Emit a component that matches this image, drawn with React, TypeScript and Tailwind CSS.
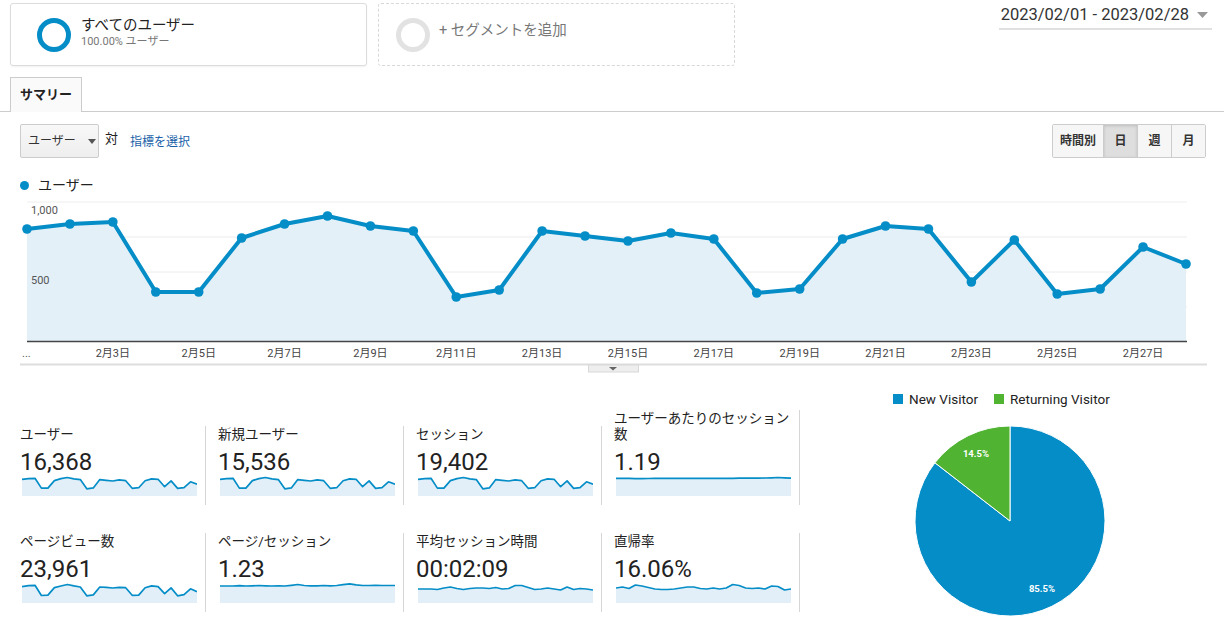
import React from 'react';

const BLUE = '#058dc7';

// pixel y of each day's point in the main chart (2/1 .. 2/28)
const MAIN_Y = [229, 224, 222, 292, 292, 238, 224, 216, 226, 231, 297, 290, 231, 236, 241, 233, 239, 293, 289, 239, 226, 229, 282, 240, 294, 289, 247, 264];

const usersSpark = MAIN_Y.map((y) => 1.5 + (y - 216) * 0.14);
const pvSpark = MAIN_Y.map((y, i) => 1.5 + (y - 216) * 0.14 + (i % 3 === 0 ? 0.4 : 0));
const perUserSpark = [2.4, 2.4, 2.4, 2.6, 2.6, 2.5, 2.4, 2.4, 2.4, 2.4, 2.4, 2.3, 2.3, 2.3, 2.3, 2.3, 2.3, 2.3, 2.3, 2.2, 2.2, 2.2, 2.1, 2.0, 1.8, 1.5, 1.8, 2.2];
const ppsSpark = [3, 3, 3, 2.6, 3, 2.8, 2.5, 2.8, 3, 2.8, 3, 2.3, 1.5, 2.5, 2.8, 2.8, 2.5, 2.8, 2.5, 1.6, 0.9, 1.8, 2.5, 2.5, 2.3, 2.5, 2.5, 2.5];
const durSpark = [6, 6, 6, 6.5, 5, 4, 5.5, 6.5, 5.5, 5, 5, 5.5, 4.5, 6, 5.5, 2.5, 2.5, 4.5, 6.5, 6, 5, 6, 7, 4, 6.5, 5.5, 6, 7];
const bounceSpark = [5, 4, 5.5, 2, 3, 4.5, 6, 6.5, 6.5, 6, 5, 4, 4, 5.5, 6, 5, 6, 5, 1.5, 2.5, 5, 5.5, 5, 6, 3, 3.5, 7, 6];

function Sparkline({ data }: { data: number[] }) {
  const w = 175;
  const h = 20;
  const step = w / (data.length - 1);
  const pts = data.map((y, i) => `${(i * step).toFixed(1)},${y.toFixed(1)}`);
  return (
    <svg width={w} height={h} className="ml-[2px] block">
      <path d={`M0,${h} L${pts.join(' L')} L${w},${h} Z`} fill="#e3eff8" />
      <polyline points={pts.join(' ')} fill="none" stroke={BLUE} strokeWidth={1.7} strokeLinejoin="round" />
    </svg>
  );
}

function Metric({ label, value, data }: { label: React.ReactNode; value: string; data: number[] }) {
  return (
    <div className="w-[198px] border-r border-[#d6d6d6] pl-[12px] pb-[9px]">
      <div className="whitespace-nowrap text-[13.5px] leading-[16px] text-[#222]">{label}</div>
      <div className="mt-[6px] text-[24px] leading-[28px] text-[#222]">{value}</div>
      <Sparkline data={data} />
    </div>
  );
}

function MainChart() {
  const step = (1186 - 27) / 27;
  const xs = MAIN_Y.map((_, i) => 7 + i * step);
  const ys = MAIN_Y.map((y) => y - 195);
  const line = xs.map((x, i) => `${x.toFixed(1)},${ys[i]}`).join(' L');
  const labels = [2, 4, 6, 8, 10, 12, 14, 16, 18, 20, 22, 24, 26];
  return (
    <svg width={1190} height={180} className="ml-[20px] block">
      {[7, 42, 77, 112].map((y) => (
        <line key={y} x1={7} x2={1167} y1={y} y2={y} stroke={y === 7 ? '#eeeeee' : '#ececec'} strokeWidth={1} />
      ))}
      <path d={`M${xs[0]},146 L${line} L${xs[27]},146 Z`} fill="#e3f0f8" />
      <line x1={7} x2={1167} y1={146.5} y2={146.5} stroke="#444" strokeWidth={1.5} />
      <text x={11} y={19} fontSize={11} fill="#555">1,000</text>
      <text x={11} y={89} fontSize={11} fill="#555">500</text>
      <path d={`M${line}`} fill="none" stroke={BLUE} strokeWidth={4} strokeLinejoin="round" />
      {xs.map((x, i) => (
        <circle key={i} cx={x} cy={ys[i]} r={4.8} fill={BLUE} />
      ))}
      <text x={2} y={162} fontSize={11} fill="#555">...</text>
      {labels.map((i) => (
        <text key={i} x={xs[i]} y={162} fontSize={11} fill="#444" textAnchor="middle">
          {`2月${i + 1}日`}
        </text>
      ))}
      <line x1={0} x2={1187} y1={169.5} y2={169.5} stroke="#dddddd" strokeWidth={2} />
      <rect x={568.5} y={170} width={50} height={7} fill="#eeeeee" stroke="#d8d8d8" />
      <path d="M589,172 L597,172 L593,175.5 Z" fill="#666" />
    </svg>
  );
}

function Pie() {
  return (
    <svg width={200} height={200} className="ml-[30px] mt-[15px] block">
      <path d="M100,100 L24.93,41.78 A95,95 0 1,0 100,5 Z" fill={BLUE} stroke="#fff" strokeWidth={1} />
      <path d="M100,100 L100,5 A95,95 0 0,0 24.93,41.78 Z" fill="#50b432" stroke="#fff" strokeWidth={1} />
      <text x={66} y={35.5} fontSize={9.5} fontWeight={700} fill="#fff" textAnchor="middle">14.5%</text>
      <text x={132} y={170.5} fontSize={9.5} fontWeight={700} fill="#fff" textAnchor="middle">85.5%</text>
    </svg>
  );
}

export default function App() {
  return (
    <div className="h-[620px] w-[1224px] overflow-hidden bg-white font-[family-name:Roboto,Noto_Sans_CJK_JP,sans-serif] text-[#222]">
      {/* segments + date range */}
      <div className="flex items-start px-[10px] pt-[3px]">
        <div className="flex h-[63px] w-[357px] items-center rounded-[3px] border border-[#dcdcdc] pl-[26px] shadow-[0_1px_2px_rgba(0,0,0,0.06)]">
          <div className="h-[34px] w-[34px] rounded-full border-[5px] border-[#058dc7]" />
          <div className="ml-[10px] -mt-[3px]">
            <div className="text-[14.5px] leading-[18px] text-[#222]">すべてのユーザー</div>
            <div className="text-[11px] leading-[14px] text-[#777]">100.00% ユーザー</div>
          </div>
        </div>
        <div className="ml-[11px] flex h-[63px] w-[357px] items-center rounded-[3px] border border-dashed border-[#d8d8d8] pl-[17px]">
          <div className="h-[34px] w-[34px] rounded-full border-[5px] border-[#e2e2e2]" />
          <div className="-mt-[8px] ml-[9px] text-[14.5px] text-[#777]">+ セグメントを追加</div>
        </div>
        <div className="ml-auto mr-[2px] mt-[1px] flex items-center border-b-2 border-[#e0e0e0] pb-[2px] pl-[2px]">
          <span className="text-[16.5px] leading-[22px] text-[#333]">2023/02/01 - 2023/02/28</span>
          <svg width={12} height={8} className="ml-[8px] mr-[3px]">
            <path d="M0,1 L11,1 L5.5,7 Z" fill="#999" />
          </svg>
        </div>
      </div>

      {/* tab */}
      <div className="mt-[11px] border-b border-[#cccccc] px-[10px]">
        <div className="-mb-px flex h-[35px] w-[72px] items-center justify-center border border-b-0 border-[#cccccc] bg-[#fafafa] text-[13px] font-bold text-[#222]">
          サマリー
        </div>
      </div>

      {/* controls */}
      <div className="mt-[12px] flex items-start pl-[20px] pr-[18px]">
        <div className="flex h-[34px] w-[79px] items-center rounded-[2px] border border-[#cccccc] bg-gradient-to-b from-[#f8f8f8] to-[#eeeeee] pl-[7px] text-[12px] text-[#333]">
          ユーザー
          <svg width={8} height={5} className="ml-[12px]">
            <path d="M0,0 L8,0 L4,5 Z" fill="#555" />
          </svg>
        </div>
        <span className="ml-[6px] mt-[5px] text-[13px] text-[#222]">対</span>
        <span className="ml-[12px] mt-[9px] text-[12px] text-[#1a5fa8]">指標を選択</span>
        <div className="ml-auto flex h-[34px] overflow-hidden rounded-[2px] border border-[#cccccc] text-[12px] font-bold text-[#333]">
          <div className="flex w-[50px] items-center justify-center bg-[#f6f6f6]">時間別</div>
          <div className="flex w-[34px] items-center justify-center border-l border-[#cccccc] bg-[#dedede] shadow-[inset_0_1px_3px_rgba(0,0,0,0.15)]">日</div>
          <div className="flex w-[34px] items-center justify-center border-l border-[#cccccc] bg-[#f6f6f6]">週</div>
          <div className="flex w-[34px] items-center justify-center border-l border-[#cccccc] bg-[#f6f6f6]">月</div>
        </div>
      </div>

      {/* legend */}
      <div className="mt-[17px] flex h-[20px] items-center pl-[20px]">
        <div className="h-[9px] w-[9px] rounded-full bg-[#058dc7]" />
        <span className="ml-[9px] text-[14px] text-[#222]">ユーザー</span>
      </div>

      <MainChart />

      {/* metrics + pie */}
      <div className="flex">
        <div className="ml-[8px] w-[800px] pt-[35px]">
          <div className="flex items-end">
            <Metric label="ユーザー" value="16,368" data={usersSpark} />
            <Metric label="新規ユーザー" value="15,536" data={usersSpark} />
            <Metric label="セッション" value="19,402" data={usersSpark} />
            <Metric
              label={
                <>
                  ユーザーあたりのセッション
                  <br />数
                </>
              }
              value="1.19"
              data={perUserSpark}
            />
          </div>
          <div className="mt-[28px] flex items-start">
            <Metric label="ページビュー数" value="23,961" data={pvSpark} />
            <Metric label="ページ/セッション" value="1.23" data={ppsSpark} />
            <Metric label="平均セッション時間" value="00:02:09" data={durSpark} />
            <Metric label="直帰率" value="16.06%" data={bounceSpark} />
          </div>
        </div>
        <div className="ml-[72px] w-[260px] pt-[17px]">
          <div className="flex h-[14px] items-center pl-[13px] text-[13.5px] text-[#222]">
            <div className="h-[10px] w-[10px] bg-[#058dc7]" />
            <span className="ml-[6px]">New Visitor</span>
            <div className="ml-[16px] h-[10px] w-[10px] bg-[#50b432]" />
            <span className="ml-[6px]">Returning Visitor</span>
          </div>
          <Pie />
        </div>
      </div>
    </div>
  );
}
